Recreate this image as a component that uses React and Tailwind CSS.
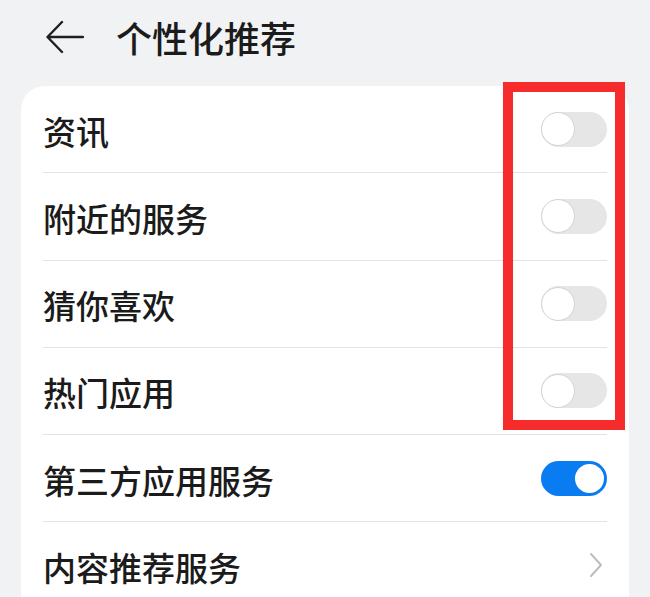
import React from "react";

const rows = [
  { label: "资讯", type: "off" },
  { label: "附近的服务", type: "off" },
  { label: "猜你喜欢", type: "off" },
  { label: "热门应用", type: "off" },
  { label: "第三方应用服务", type: "on" },
  { label: "内容推荐服务", type: "chevron" },
];

function Toggle({ on }) {
  if (on) {
    return (
      <div className="flex h-[35px] w-[66px] items-center justify-end rounded-full bg-[#0a7cf2] px-[3px]">
        <div className="h-[29px] w-[29px] rounded-full bg-white" />
      </div>
    );
  }
  return (
    <div className="flex h-[35px] w-[66px] items-center justify-start rounded-full bg-[#e6e6e6]">
      <div className="h-[34px] w-[34px] rounded-full border-[1.5px] border-[#d4d4d4] bg-white" />
    </div>
  );
}

function Chevron() {
  return (
    <svg width="14" height="26" viewBox="0 0 14 26" className="mr-[4px]">
      <path d="M2 2 L12 13 L2 24" fill="none" stroke="#bdbdbd" strokeWidth="2" strokeLinecap="round" strokeLinejoin="round" />
    </svg>
  );
}

export default function App() {
  return (
    <div
      className="relative h-[597px] w-[650px] overflow-hidden bg-[#f1f2f4]"
      style={{ fontFamily: '"Noto Sans CJK SC", "Noto Sans", sans-serif' }}
    >
      <div className="flex h-[74px] items-center pl-[46px]">
        <svg width="38" height="34" viewBox="0 0 38 34">
          <path d="M37 17 H2 M16 2 L1.5 17 L16 32" fill="none" stroke="#1f1f1f" strokeWidth="2.4" strokeLinecap="round" strokeLinejoin="round" />
        </svg>
        <span className="ml-[32px] text-[36px] font-medium leading-none text-[#1b1b1b]">个性化推荐</span>
      </div>

      <div className="mx-[21px] mt-[12px] rounded-[24px] bg-white px-[22px] pb-[20px]">
        {rows.map((r, i) => (
          <div key={r.label}>
            <div className="flex h-[86.25px] items-center justify-between">
              <span className="pt-[4px] text-[33px] font-medium leading-none text-[#1b1b1b]">{r.label}</span>
              {r.type === "off" && <Toggle on={false} />}
              {r.type === "on" && <Toggle on={true} />}
              {r.type === "chevron" && <Chevron />}
            </div>
            {i < rows.length - 1 && <div className="h-px bg-[#e3e3e3]" />}
          </div>
        ))}
      </div>

      <div className="pointer-events-none absolute left-[503px] top-[82px] h-[348px] w-[122px] border-[10px] border-[#f62b2b]" />
    </div>
  );
}
